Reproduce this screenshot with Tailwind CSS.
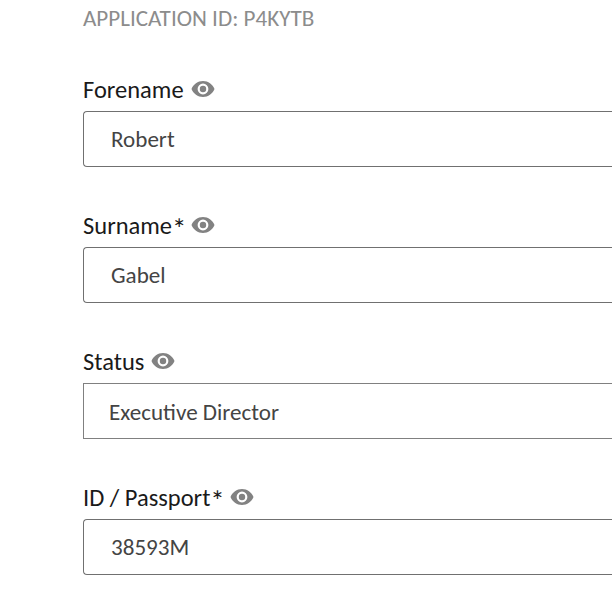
<!DOCTYPE html>
<html lang="en">
<head>
    <meta charset="UTF-8">
    <meta name="viewport" content="width=device-width, initial-scale=1.0">
    <title>Application</title>
    <script src="https://cdn.jsdelivr.net/npm/@tailwindcss/browser@4"></script>
</head>

<body class="bg-white overflow-hidden font-[Calibri,Carlito,Lato,sans-serif] text-[23.1px] text-[#1a1a1a]">

    <!-- Icon shared by all the field labels -->
    <svg class="hidden">
        <symbol id="eye" viewBox="0 0 24 16">
            <path fill="currentColor" fill-rule="evenodd" d="M12 0C6.800 0 2.400 3.300.5 8c1.900 4.700 6.300 8 11.500 8s9.600-3.300 11.500-8C21.600 3.300 17.200 0 12 0Zm0 13.400a5.400 5.400 0 1 1 0-10.800 5.400 5.400 0 0 1 0 10.800Zm0-2.200a3.200 3.200 0 1 0 0-6.400 3.200 3.200 0 0 0 0 6.400Z"/>
        </symbol>
    </svg>

    <main class="pl-[83px]">
        <h1 class="h-[75px] pt-[3px] leading-[30px] text-[#8c8c8c]">APPLICATION ID: P4KYTB</h1>

        <form>
            <div class="h-[136px]">
                <label class="flex items-center h-9 pb-1.5 gap-[7px] text-[24.5px]">
                    <span>Forename</span>
                    <svg class="w-6 h-4 mb-0.5 text-[#828282]"><use href="#eye"/></svg>
                </label>
                <div class="flex items-center h-14 pl-[27px] border border-r-0 border-[#707070] rounded-l text-[#444]"><span>Robert</span></div>
            </div>

            <div class="h-[136px]">
                <label class="flex items-center h-9 pb-1.5 gap-[4px] text-[24.5px]">
                    <span>Surname<span class="relative top-[5px] text-[29px] leading-none">*</span></span>
                    <svg class="w-6 h-4 mb-0.5 text-[#828282]"><use href="#eye"/></svg>
                </label>
                <div class="flex items-center h-14 pl-[27px] border border-r-0 border-[#707070] rounded-l text-[#444]"><span>Gabel</span></div>
            </div>

            <div class="h-[136px]">
                <label class="flex items-center h-9 pb-1.5 gap-[7px] text-[24.5px]">
                    <span>Status</span>
                    <svg class="w-6 h-4 mb-0.5 text-[#828282]"><use href="#eye"/></svg>
                </label>
                <div class="flex items-center h-14 pl-[25px] pt-0.5 border border-r-0 border-[#808080] text-[#444]"><span>Executive Director</span></div>
            </div>

            <div class="h-[136px]">
                <label class="flex items-center h-9 pb-1.5 gap-[5px] text-[24.5px]">
                    <span>ID / Passport<span class="relative top-[5px] text-[29px] leading-none">*</span></span>
                    <svg class="w-6 h-4 mb-0.5 text-[#828282]"><use href="#eye"/></svg>
                </label>
                <div class="flex items-center h-14 pl-[27px] border border-r-0 border-[#707070] rounded-l text-[#444]"><span>38593M</span></div>
            </div>
        </form>
    </main>

</body>
</html>
